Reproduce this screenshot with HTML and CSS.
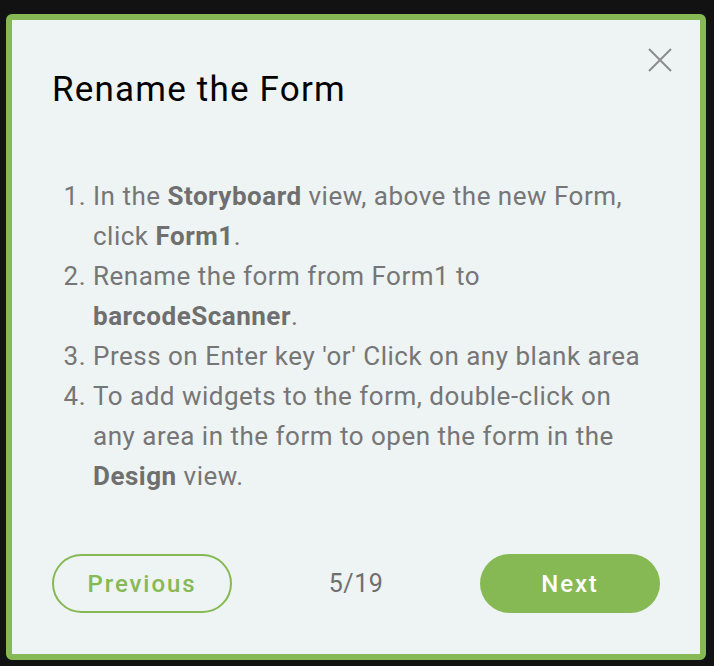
FILE: index.html
```html
<!DOCTYPE html>
<html lang="en">
<head>
  <meta charset="UTF-8" />
  <meta name="viewport" content="width=device-width, initial-scale=1.0" />
  <title>Rename the Form</title>
  <link rel="stylesheet" href="styles.css">
</head>
<body>
  <div class="card">
    <div class="card-header">
      <h1>Rename the Form</h1>
      <button class="close" aria-label="Close">
        <svg width="24" height="24" viewBox="0 0 24 24">
          <path d="M1 1 L23 23 M23 1 L1 23" stroke="#8c8c8c" stroke-width="2" fill="none" />
        </svg>
      </button>
    </div>
    <ol class="steps">
      <li>In the <b>Storyboard</b> view, above the new Form, click <b>Form1</b>.</li>
      <li>Rename the form from Form1 to <b>barcodeScanner</b>.</li>
      <li>Press on Enter key 'or' Click on any blank area</li>
      <li>To add widgets to the form, double-click on any area in the form to open the form in the <b>Design</b> view.</li>
    </ol>
    <div class="card-footer">
      <button class="btn btn-outline">Previous</button>
      <span class="counter">5/19</span>
      <button class="btn btn-fill">Next</button>
    </div>
  </div>
</body>
</html>
```

FILE: styles.css
```css
body {
  background-color: #121212;
  margin: 0;
  padding: 14px 8px 6px 6px;
  font-family: Roboto, "Liberation Sans", sans-serif;
}
.card {
  width: 700px;
  box-sizing: border-box;
  background-color: #eef3f3;
  border: 6px solid #86b953;
  border-radius: 6px;
  padding: 28px 40px 41px 40px;
}
.card-header {
  display: flex;
  justify-content: space-between;
  align-items: flex-start;
}
h1 {
  margin: 21px 0 0 0;
  font-size: 35px;
  font-weight: 400;
  line-height: 42px;
  letter-spacing: 1.2px;
  color: #000;
}
.close {
  background: none;
  border: none;
  padding: 0;
  margin-right: -12px;
  width: 24px;
  height: 24px;
  cursor: pointer;
}
.close svg {
  display: block;
}
.steps {
  margin: 65px 0 0 0;
  padding-left: 41px;
  padding-right: 10px;
  font-size: 26px;
  line-height: 40px;
  letter-spacing: 0.5px;
  color: #767676;
}
.steps b {
  font-weight: 700;
  color: #6f6f6f;
}
.card-footer {
  margin-top: 58px;
  display: flex;
  justify-content: space-between;
  align-items: center;
}
.btn {
  width: 180px;
  height: 59px;
  box-sizing: border-box;
  border-radius: 30px;
  font-family: Roboto, "Liberation Sans", sans-serif;
  font-size: 24px;
  font-weight: 500;
  letter-spacing: 1.9px;
  cursor: pointer;
}
.btn-outline {
  background: none;
  border: 2px solid #86b953;
  color: #86b953;
}
.btn-fill {
  background-color: #86b953;
  border: none;
  color: #fff;
}
.counter {
  font-size: 25px;
  letter-spacing: 0.5px;
  color: #6f6f6f;
}
```
